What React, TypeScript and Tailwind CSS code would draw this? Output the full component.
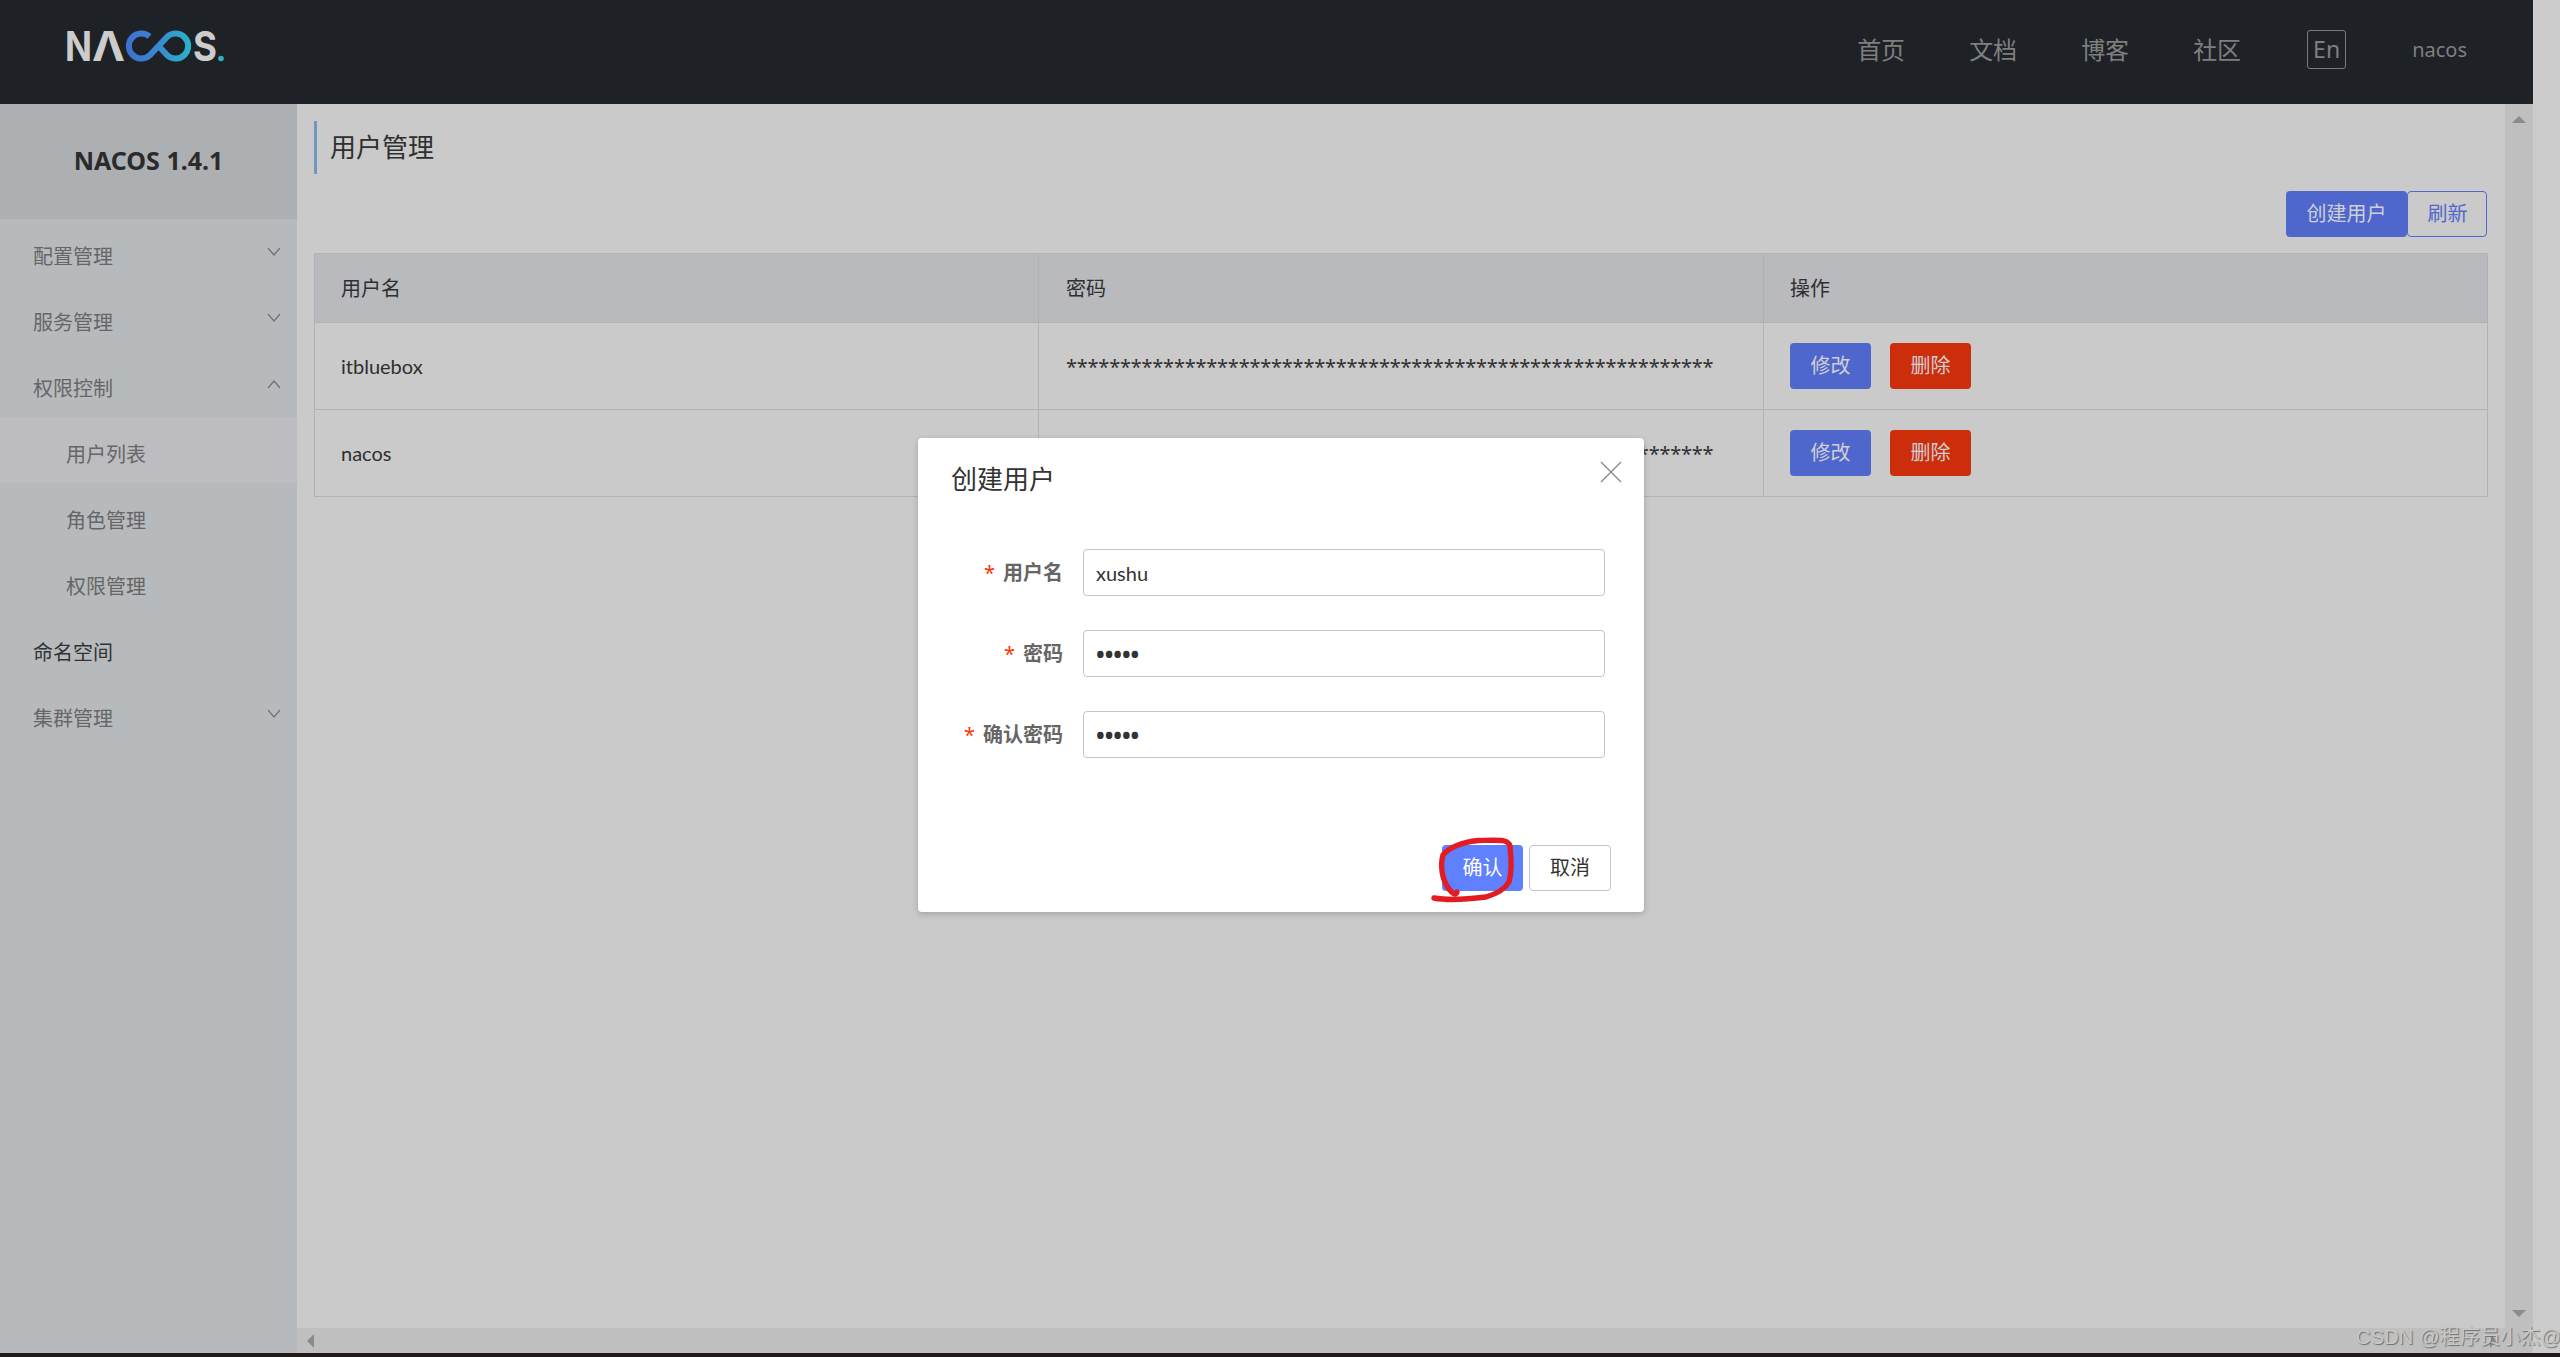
import React from "react";

const font = "[font-family:'Noto_Sans','Noto_Sans_CJK_SC',sans-serif]";

function Chevron({ up = false }: { up?: boolean }) {
  return (
    <svg width="14" height="10" viewBox="0 0 14 10" fill="none" className="absolute left-[267px] top-[28px]">
      <path d={up ? "M1 9 L7 2 L13 9" : "M1 1 L7 8 L13 1"} stroke="#6f7274" strokeWidth="1.2" />
    </svg>
  );
}

function MenuItem({ label, sub = false, active = false, chevron, dark = false }: { label: string; sub?: boolean; active?: boolean; chevron?: "up" | "down"; dark?: boolean }) {
  return (
    <div
      className={`relative h-[66px] pt-[9px] flex items-center text-[20px] ${sub ? "pl-[66px]" : "pl-[33px]"} ${active ? "bg-[#bdbcc0]" : ""} ${dark ? "text-[#333333]" : "text-[#666666]"}`}
    >
      {label}
      {chevron && <Chevron up={chevron === "up"} />}
    </div>
  );
}

function Logo() {
  return (
    <svg width="170" height="45" viewBox="60 25 170 45" className="block overflow-visible" fill="none">
      <defs>
        <linearGradient id="nacosGrad" x1="125" y1="0" x2="192" y2="0" gradientUnits="userSpaceOnUse">
          <stop offset="0" stopColor="#3f6fd2" />
          <stop offset="0.45" stopColor="#3a85cf" />
          <stop offset="1" stopColor="#28b6c9" />
        </linearGradient>
      </defs>
      <text x="65" y="62" fontFamily="Inter" fontWeight="700" fontSize="41" fill="#cccccc" textLength="27" lengthAdjust="spacingAndGlyphs">N</text>
      <text x="92" y="62" fontFamily="Inter" fontWeight="700" fontSize="41" fill="#cccccc" textLength="33" lengthAdjust="spacingAndGlyphs">Λ</text>
      <path
        d="M149.5 37.5 A12.5 12.5 0 1 0 149.5 56.5 L167.5 37.5 A12.5 12.5 0 1 1 167.5 56.5 L160 48.5"
        stroke="url(#nacosGrad)"
        strokeWidth="6"
      />
      <text x="193" y="62" fontFamily="Inter" fontWeight="700" fontSize="41" fill="#cccccc" textLength="24" lengthAdjust="spacingAndGlyphs">S</text>
      <circle cx="221" cy="59.5" r="2.8" fill="#2bb4c4" />
    </svg>
  );
}

function TableButton({ label, red = false }: { label: string; red?: boolean }) {
  return (
    <button className={`w-[81px] h-[46px] rounded-[4px] text-[20px] text-[#cfcfd6] ${red ? "bg-[#cc2e0c]" : "bg-[#4f67cc]"}`}>{label}</button>
  );
}

function FormRow({ label, value, password = false }: { label: string; value: string; password?: boolean }) {
  return (
    <div className="flex items-center h-[47px]">
      <div className="w-[145px] text-right text-[20px] font-bold text-[#666666] whitespace-nowrap">
        <span className="text-[#ff3000] mr-[8px] font-normal">*</span>
        {label}
      </div>
      <input
        readOnly
        type={password ? "password" : "text"}
        value={value}
        className={`ml-[20px] w-[522px] h-[47px] rounded-[4px] border border-[#c4c6cf] px-[12px] text-[#333333] bg-white outline-none ${password ? "text-[23px] font-bold" : "text-[20px] [font-family:'Lato','Noto_Sans',sans-serif]"}`}
      />
    </div>
  );
}

const stars = "*".repeat(60);

export default function App() {
  return (
    <div className={`relative h-screen w-full overflow-hidden flex flex-col bg-[#cccccc] ${font}`}>
      <div className="flex-1 min-h-0 flex flex-col w-[2533px]">
        <header className="h-[104px] shrink-0 bg-[#1e2227] flex items-center">
          <div className="ml-[60px] -mt-[11px]">
            <Logo />
          </div>
          <nav className="ml-auto pb-[5px] flex items-center text-[24px] text-[#7f7f7f]">
            <span>首页</span>
            <span className="ml-[64px]">文档</span>
            <span className="ml-[64px]">博客</span>
            <span className="ml-[64px]">社区</span>
            <span className="ml-[66px] w-[39px] h-[39px] flex items-center justify-center border border-[#7a7a7a] rounded-[3px] text-[23px] leading-none">En</span>
            <span className="ml-[66px] mr-[66px] text-[20px]">nacos</span>
          </nav>
        </header>
        <div className="flex-1 min-h-0 flex">
          <aside className="w-[297px] shrink-0 bg-[#b7babd]">
            <div className="h-[115px] bg-[#adb0b3] flex items-center justify-center pb-[1px] text-[25px] font-bold text-[#2b2b2b]">NACOS 1.4.1</div>
            <MenuItem label="配置管理" chevron="down" />
            <MenuItem label="服务管理" chevron="down" />
            <MenuItem label="权限控制" chevron="up" />
            <MenuItem label="用户列表" sub active />
            <MenuItem label="角色管理" sub />
            <MenuItem label="权限管理" sub />
            <MenuItem label="命名空间" dark />
            <MenuItem label="集群管理" chevron="down" />
          </aside>
          <div className="flex-1 min-w-0 flex flex-col">
            <div className="flex-1 min-h-0 flex">
              <main className="flex-1 min-w-0 bg-[#cacaca] pl-[17px] pr-[18px] pt-[17px]">
                <div className="h-[53px] border-l-[3px] border-[#6f97c4] pl-[13px] flex items-center text-[26px] text-[#2f2f2f]">用户管理</div>
                <div className="mt-[17px] flex justify-end">
                  <button className="w-[121px] h-[46px] rounded-[4px] bg-[#4f67cc] text-[20px] text-[#cfcfd6]">创建用户</button>
                  <button className="w-[80px] h-[46px] rounded-[4px] border border-[#4f67cc] pl-[1px] text-[20px] text-[#5068cc]">刷新</button>
                </div>
                <table className="mt-[16px] w-[2173px] table-fixed border-collapse text-[20px] text-[#2f2f2f]">
                  <colgroup>
                    <col className="w-[724px]" />
                    <col className="w-[725px]" />
                    <col className="w-[724px]" />
                  </colgroup>
                  <thead>
                    <tr className="h-[69px] bg-[#b9babe]">
                      <th className="border border-[#b2b2b5] pl-[26px] pt-[2px] text-left font-normal">用户名</th>
                      <th className="border border-[#b2b2b5] pl-[27px] pt-[2px] text-left font-normal">密码</th>
                      <th className="border border-[#b2b2b5] pl-[26px] pt-[2px] text-left font-normal">操作</th>
                    </tr>
                  </thead>
                  <tbody>
                    {["itbluebox", "nacos"].map((name) => (
                      <tr key={name} className="h-[87px]">
                        <td className="border border-[#b2b2b5] pl-[26px] [font-family:'Lato','Noto_Sans',sans-serif]">{name}</td>
                        <td className="border border-[#b2b2b5] pl-[27px] pt-[2px] tracking-[-0.23px] whitespace-nowrap overflow-hidden">{stars}</td>
                        <td className="border border-[#b2b2b5] pl-[26px]">
                          <div className="flex gap-[19px]">
                            <TableButton label="修改" />
                            <TableButton label="删除" red />
                          </div>
                        </td>
                      </tr>
                    ))}
                  </tbody>
                </table>
              </main>
              <div className="w-[28px] shrink-0 bg-[#bfbfbf] flex flex-col items-center justify-between pt-[12px] pb-[11px]">
                <svg width="14" height="7" viewBox="0 0 14 7"><path d="M7 0 L14 7 L0 7 Z" fill="#8b8b8b" /></svg>
                <svg width="14" height="7" viewBox="0 0 14 7"><path d="M0 0 L14 0 L7 7 Z" fill="#8b8b8b" /></svg>
              </div>
            </div>
            <div className="h-[25px] shrink-0 bg-[#bfbfbf] flex items-center justify-between pl-[10px] pr-[36px]">
              <svg width="7" height="14" viewBox="0 0 7 14"><path d="M7 0 L7 14 L0 7 Z" fill="#8b8b8b" /></svg>
              <svg width="7" height="14" viewBox="0 0 7 14"><path d="M0 0 L7 7 L0 14 Z" fill="#8b8b8b" /></svg>
            </div>
          </div>
        </div>
      </div>
      <div className="h-[4px] shrink-0 bg-[#201a1a]" />

      <div className="absolute left-[918px] top-[438px] w-[726px] h-[474px] rounded-[4px] bg-white shadow-[0_2px_6px_rgba(0,0,0,0.2)] flex flex-col">
        <div className="relative h-[111px] shrink-0">
          <div className="pl-[33px] pt-[21px] text-[26px] leading-[40px] text-[#333333]">创建用户</div>
          <svg width="22" height="22" viewBox="0 0 22 22" className="absolute left-[682px] top-[23px]" fill="none">
            <path d="M1 1 L21 21 M21 1 L1 21" stroke="#8a8a8a" strokeWidth="1.4" />
          </svg>
        </div>
        <div className="flex flex-col gap-[34px]">
          <FormRow label="用户名" value="xushu" />
          <FormRow label="密码" value="xushu" password />
          <FormRow label="确认密码" value="xushu" password />
        </div>
        <div className="mt-auto mb-[21px] mr-[33px] flex justify-end gap-[6px]">
          <button className="w-[81px] h-[46px] rounded-[4px] bg-[#5f80ff] text-[20px] text-white">确认</button>
          <button className="w-[82px] h-[46px] rounded-[4px] border border-[#c4c6cf] bg-white text-[20px] text-[#333333]">取消</button>
        </div>
      </div>

      <svg width="100" height="70" viewBox="1425 835 100 70" fill="none" className="absolute left-[1425px] top-[835px]">
        <path
          d="M1434 898 C1450 901 1470 899 1486 897 C1496 894 1505 889 1509 882 C1512 872 1511 855 1510 846 C1508 839 1500 840 1478 840.5 C1462 842 1448 848 1443 855 C1440 866 1442 880 1449 889 C1452 893 1456 896 1457 892"
          stroke="#e31c23"
          strokeWidth="5.4"
          strokeLinecap="round"
          strokeLinejoin="round"
        />
      </svg>

      <div className="absolute left-[2356px] top-[1324px] text-[20px] leading-[26px] tracking-[0.2px] text-[#c8c8c8] whitespace-nowrap [font-family:'Liberation_Sans','Noto_Sans_CJK_SC',sans-serif] [text-shadow:1px_1px_1px_rgba(90,90,90,0.8)]">CSDN @程序员小杰@</div>
    </div>
  );
}
